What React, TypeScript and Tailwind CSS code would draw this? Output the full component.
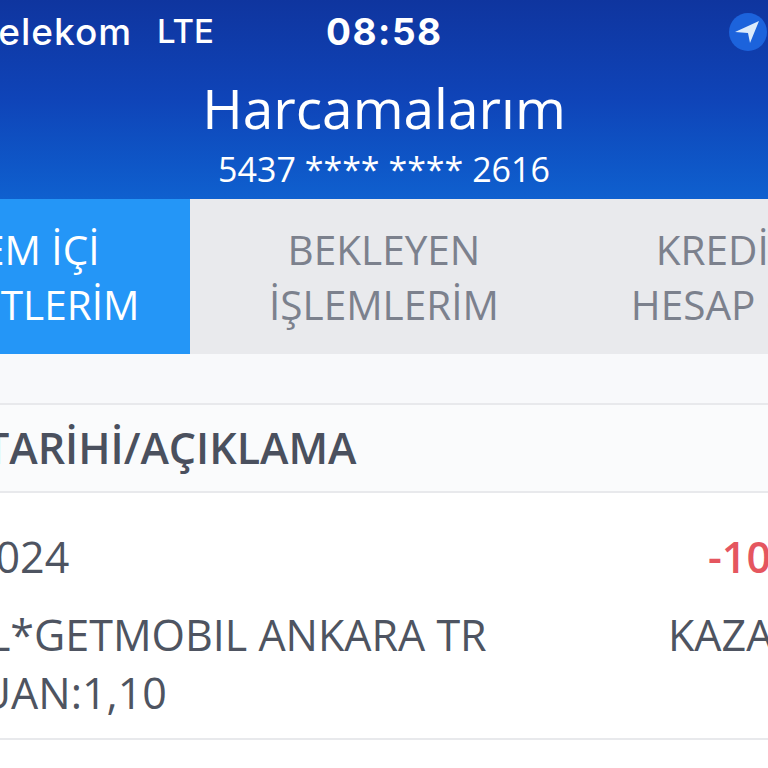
export default function App() {
  return (
    <div className="flex h-[768px] w-[768px] flex-col overflow-hidden bg-white font-['Open_Sans',sans-serif]">
      <header className="h-[199px] shrink-0 bg-gradient-to-b from-[#0f359f] via-[#0f44b8] to-[#0f60cf] text-white">
        <div className="flex h-[64px] items-center font-['Inter',sans-serif] whitespace-nowrap">
          <span className="-ml-[24px] w-[181px] text-[37px] font-medium tracking-[1px]">Telekom</span>
          <span className="w-[169px] text-[33px] font-medium">LTE</span>
          <span className="text-[37px] font-bold tracking-[1.5px]">08:58</span>
          <svg className="ml-auto mr-[1px] h-[38px] w-[38px] shrink-0" viewBox="0 0 38 38">
            <circle cx="19" cy="19" r="19" fill="#1c63dc" />
            <path d="M30 8 L6 19 L19 20 L21 30 Z" fill="#dcebfb" />
          </svg>
        </div>
        <h1 className="mt-[14px] text-center text-[55px] leading-[60px] font-normal">Harcamalarım</h1>
        <p className="mt-[11px] text-center text-[34px] leading-[40px]">5437 **** **** 2616</p>
      </header>

      <div className="-ml-[200px] flex h-[155px] shrink-0 text-[40.5px] leading-[55px]">
        <div className="flex w-[390px] shrink-0 items-center justify-center bg-[#2496f7] text-center whitespace-nowrap text-white">
          <span>
            DÖNEM İÇİ
            <br />
            HAREKETLERİM
          </span>
        </div>
        <div className="flex w-[388px] shrink-0 items-center justify-center bg-[#e9eaed] text-center text-[#7c818d]">
          <span>
            BEKLEYEN
            <br />
            İŞLEMLERİM
          </span>
        </div>
        <div className="flex w-[388px] shrink-0 items-center justify-center bg-[#e9eaed] text-center whitespace-nowrap text-[#7c818d]">
          <span>
            KREDİ KARTI
            <br />
            HESAP ÖZETİM
          </span>
        </div>
      </div>

      <div className="h-[49px] shrink-0 bg-[#f8f9fb]" />

      <div className="flex h-[90px] shrink-0 items-center border-y-2 border-[#e8e9ec] bg-[#fafbfc] text-[43px] font-semibold whitespace-nowrap text-[#4a505e]">
        <span className="-ml-[150px]">İŞLEM TARİHİ/AÇIKLAMA</span>
      </div>

      <div className="flex h-[247px] shrink-0 justify-between border-b-2 border-[#e8e9ec] text-[43px] whitespace-nowrap text-[#4e5461]">
        <div className="flex flex-col pt-[34px] leading-[60px]">
          <span className="-ml-[150px]">10.01.2024</span>
          <span className="mt-[18px] -ml-[124px]">MOBIL*GETMOBIL ANKARA TR</span>
          <span className="-mt-[2px] -ml-[289px]">KAZANILAN PUAN:1,10</span>
        </div>
        <div className="-mr-[100px] flex w-[199px] shrink-0 flex-col items-start pt-[34px] leading-[60px]">
          <span className="ml-[39px] font-semibold text-[#e5565f]">-100,00</span>
          <span className="mt-[18px] -ml-[1px]">KAZANILDI</span>
        </div>
      </div>
    </div>
  );
}
